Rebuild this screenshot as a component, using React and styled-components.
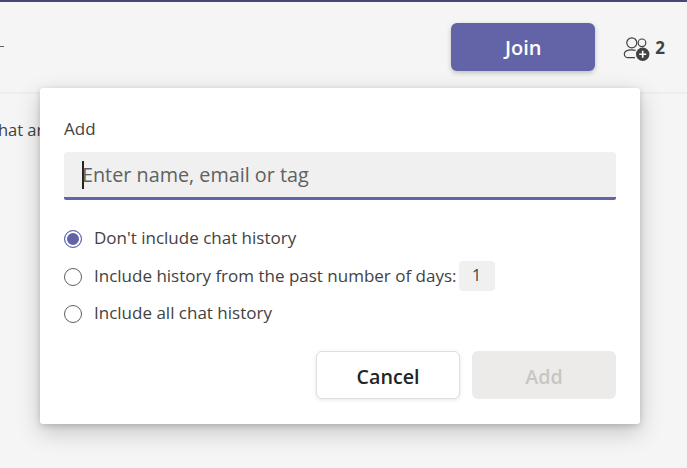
import React from 'react';
import styled, {createGlobalStyle} from 'styled-components';

const GlobalStyle = createGlobalStyle`
  html, body {
    margin: 0;
    height: 100%;
    background: #f5f5f5;
    font-family: "Open Sans", "Noto Sans", "Liberation Sans", sans-serif;
    color: #252423;
    overflow: hidden;
  }
`;

const Page = styled.div`
  position: relative;
  width: 687px;
  height: 468px;
  overflow: hidden;
  background: #f5f5f5;
`;

const Header = styled.header`
  display: flex;
  align-items: center;
  height: 90px;
  border-top: 2px solid #464775;
  border-bottom: 2px solid #ededed;
  padding-right: 22px;
`;

const Dash = styled.span`
  width: 4px;
  height: 1px;
  margin-top: -1px;
  background: #616161;
`;

const JoinButton = styled.button`
  width: 144px;
  height: 48px;
  margin-left: auto;
  padding: 1px 0 0;
  border: 0;
  border-radius: 6px;
  background: #6264a7;
  box-shadow: 0 2px 5px rgba(0, 0, 0, 0.22);
  color: #fff;
  font: 600 20px "Open Sans", sans-serif;
`;

const People = styled.div`
  display: flex;
  align-items: center;
  gap: 5px;
  margin-left: 27px;
  color: #424242;
  font-size: 17px;
  font-weight: 700;
`;

const Content = styled.div`
  padding-top: 24px;
  margin-left: -8px;
  color: #424242;
  font-size: 16.5px;
  white-space: nowrap;
`;

const Popover = styled.section`
  position: absolute;
  left: 40px;
  top: 88px;
  width: 600px;
  height: 336px;
  box-sizing: border-box;
  padding: 29px 24px 0;
  border-radius: 3px;
  background: #fff;
  box-shadow: 0 8px 24px rgba(0, 0, 0, 0.2), 0 2px 6px rgba(0, 0, 0, 0.16);
`;

const FieldLabel = styled.label`
  display: block;
  height: 24px;
  margin-bottom: 11px;
  color: #424242;
  font-size: 17px;
  line-height: 24px;
`;

const SearchBox = styled.div`
  display: flex;
  align-items: center;
  height: 48px;
  box-sizing: border-box;
  padding-left: 18px;
  border-bottom: 3px solid #6264a7;
  border-radius: 4px 4px 2px 2px;
  background: #f0f0f0;
  color: #616161;
  font-size: 19.8px;
`;

const Caret = styled.span`
  width: 2px;
  height: 28px;
  margin-right: -2px;
  background: #252423;
`;

const Options = styled.div`
  display: flex;
  flex-direction: column;
  gap: 9px;
  margin-top: 23px;
`;

const Option = styled.div`
  display: flex;
  align-items: center;
  gap: 12px;
  height: ${(p) => p.$height}px;
  color: #424242;
  font-size: 17px;
  white-space: nowrap;
`;

const Radio = styled.span`
  flex: none;
  width: 18px;
  height: 18px;
  margin-top: 4px;
  box-sizing: border-box;
  border-radius: 50%;
  border: 1px solid ${(p) => (p.$checked ? '#6264a7' : '#616161')};
  background: ${(p) => (p.$checked ? '#6264a7' : '#fff')};
  box-shadow: ${(p) => (p.$checked ? 'inset 0 0 0 2px #fff' : 'none')};
`;

const DaysInput = styled.span`
  width: 36px;
  height: 30px;
  margin: 2px 0 0 -10px;
  border-radius: 4px;
  background: #f0f0f0;
  text-align: center;
  line-height: 28px;
  font-size: 16px;
`;

const Actions = styled.div`
  display: flex;
  justify-content: flex-end;
  gap: 12px;
  margin-top: 26px;
`;

const ActionButton = styled.button`
  width: 144px;
  height: 48px;
  padding: 2px 0 0;
  box-sizing: border-box;
  border-radius: 6px;
  border: ${(p) => (p.disabled ? '0' : '1px solid #e1dfdd')};
  background: ${(p) => (p.disabled ? '#edebe9' : '#fff')};
  box-shadow: ${(p) => (p.disabled ? 'none' : '0 1px 4px rgba(0, 0, 0, 0.1)')};
  color: ${(p) => (p.disabled ? '#c8c6c4' : '#252423')};
  font: 600 19.7px "Open Sans", sans-serif;
`;

function PeopleAddIcon() {
  return (
    <svg width="28" height="28" viewBox="0 0 28 28" fill="none" stroke="#424242" strokeWidth="1.2">
      <circle cx="9.8" cy="9.8" r="5" />
      <circle cx="20" cy="9.8" r="3.8" />
      <path d="M13 24.7H6A3.7 3.7 0 0 1 2.3 21C2.3 18 5 16.8 9.8 16.8C11.2 16.8 12.4 17 13.6 17.3" />
      <circle cx="20.7" cy="21.3" r="6.7" fill="#424242" stroke="none" />
      <path d="M20.7 17.8V24.8M17.2 21.3H24.2" stroke="#fff" strokeWidth="1.6" />
    </svg>
  );
}

export default function App() {
  return (
    <Page>
      <GlobalStyle />
      <Header>
        <Dash />
        <JoinButton>Join</JoinButton>
        <People>
          <PeopleAddIcon />
          2
        </People>
      </Header>
      <Content>that are</Content>
      <Popover>
        <FieldLabel>Add</FieldLabel>
        <SearchBox>
          <Caret />
          Enter name, email or tag
        </SearchBox>
        <Options>
          <Option $height={28}>
            <Radio $checked />
            Don't include chat history
          </Option>
          <Option $height={30}>
            <Radio />
            Include history from the past number of days:
            <DaysInput>1</DaysInput>
          </Option>
          <Option $height={26}>
            <Radio />
            Include all chat history
          </Option>
        </Options>
        <Actions>
          <ActionButton>Cancel</ActionButton>
          <ActionButton disabled>Add</ActionButton>
        </Actions>
      </Popover>
    </Page>
  );
}
